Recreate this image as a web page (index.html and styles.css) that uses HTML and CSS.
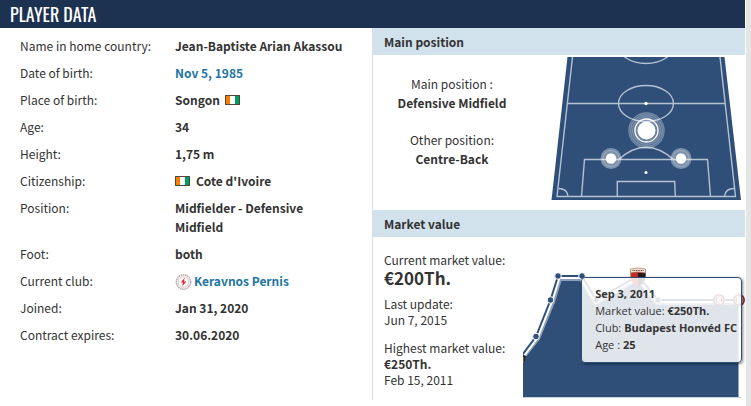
FILE: index.html
```html
<!DOCTYPE html>
<html lang="en">
<head>
<meta charset="utf-8">
<title>Player data</title>
<link rel="stylesheet" href="styles.css">
</head>
<body>
<svg class="defs" aria-hidden="true">
  <symbol id="flag" viewBox="0 0 15 10">
    <path fill="#fff" d="M0 0h15v10H0z"/><path fill="#f77f00" d="M0 0h5v10H0z"/><path fill="#009e60" d="M10 0h5v10h-5z"/>
    <path fill="none" stroke="#50463f" d="M.5.5h14v9H.5z"/>
  </symbol>
</svg>
<main class="panel">
  <h1 class="panel-title">PLAYER DATA</h1>
  <div class="columns">
    <section class="facts">
      <table class="facts-table">
        <tr><th scope="row">Name in home country:</th><td>Jean-Baptiste Arian Akassou</td></tr>
        <tr><th scope="row">Date of birth:</th><td><a href="#birth">Nov 5, 1985</a></td></tr>
        <tr><th scope="row">Place of birth:</th><td>Songon <svg class="flag flag-after"><use href="#flag"/></svg></td></tr>
        <tr><th scope="row">Age:</th><td>34</td></tr>
        <tr><th scope="row">Height:</th><td>1,75 m</td></tr>
        <tr><th scope="row">Citizenship:</th><td><svg class="flag flag-before"><use href="#flag"/></svg>Cote d'Ivoire</td></tr>
        <tr><th scope="row">Position:</th><td>Midfielder - Defensive<br>Midfield</td></tr>
        <tr><th scope="row">Foot:</th><td>both</td></tr>
        <tr><th scope="row">Current club:</th><td><svg class="crest" viewBox="0 0 17 16"><circle cx="8.5" cy="8" r="7.2" fill="#f8f3f3" stroke="#b5a9ab" stroke-width="1.4" stroke-dasharray="1.6 .6"/><circle cx="8.5" cy="8" r="5.2" fill="#fff" stroke="#e1babd" stroke-width=".8"/><path fill="#e2252e" d="M9.6 3.8 5.8 8.5h2.3L7 12.4 11.4 7.500H9z"/></svg><a href="#club">Keravnos Pernis</a></td></tr>
        <tr><th scope="row">Joined:</th><td>Jan 31, 2020</td></tr>
        <tr><th scope="row">Contract expires:</th><td>30.06.2020</td></tr>
      </table>
    </section>
    <div class="side">
      <section>
        <h2 class="bar">Main position</h2>
        <div class="position">
          <div class="position-text">
            <p>Main position :<br><b>Defensive Midfield</b></p>
            <p>Other position:<br><b>Centre-Back</b></p>
          </div>
          <svg class="pitch" viewBox="551 57 190 143" role="img" aria-label="Pitch">
            <path fill="#2f4f79" d="M567.500 57h157L741 200H551.500z"/>
            <g fill="none" stroke="#b4c2d3" stroke-width="1.4">
              <path d="M572.500 57 557 196.500H735.500L720 57M567 103.500h158"/>
              <ellipse cx="646" cy="103.500" rx="27.500" ry="18"/>
              <ellipse cx="646" cy="45.500" rx="27.500" ry="18"/>
              <path d="M581.500 196.500 584.500 159.500H707.500L710.500 196.500M617.300 196.500V181.500H674.700L675.300 196.500M618 160Q646 134.500 674 160M558.500 188.500Q567 188.500 568 196M734 188.500Q725.500 188.500 724.500 196"/>
            </g>
            <g fill="#fff"><circle cx="646" cy="103.500" r="1.700"/><circle cx="646" cy="172.500" r="1.500"/></g>
            <g fill="#fff">
              <circle cx="646.500" cy="130.500" r="18" fill-opacity=".22"/>
              <circle cx="646.500" cy="130.500" r="13" fill-opacity=".12"/>
              <circle cx="611" cy="158.500" r="10.500" fill-opacity=".38"/>
              <circle cx="681" cy="158.500" r="10.500" fill-opacity=".38"/>
              <circle cx="646.500" cy="130.500" r="9"/>
              <circle cx="611" cy="158.500" r="5.200"/>
              <circle cx="681" cy="158.500" r="5.200"/>
            </g>
            <g fill="none" stroke="#fff">
              <circle cx="646.500" cy="130.500" r="11.500" stroke-width="1.300"/>
              <g stroke-opacity=".32" stroke-width=".7"><circle cx="646.500" cy="130.500" r="14"/><circle cx="646.500" cy="130.500" r="16"/><circle cx="646.500" cy="130.500" r="17.800"/><circle cx="611" cy="158.500" r="8"/><circle cx="681" cy="158.500" r="8"/></g>
            </g>
          </svg>
        </div>
      </section>
      <section>
        <h2 class="bar">Market value</h2>
        <div class="market">
          <div class="market-text">
            <p class="current">Current market value:<b class="value">€200Th.</b></p>
            <p>Last update:<br>Jun 7, 2015</p>
            <p>Highest market value:<br><b>€250Th.</b><br>Feb 15, 2011</p>
          </div>
          <div class="chart">
            <svg class="chart-plot" viewBox="523 265 222 134" role="img" aria-label="Market value history">
              <path fill="#2f4f79" d="M523 354 536 336.500 550.500 300 558 276H582L596 300 638 276 658 300H738.500V397H523z"/>
              <path stroke="#c0d0e0" d="M523 397.500H741"/>
              <path fill="none" stroke="#fff" stroke-opacity=".45" stroke-width="4" d="M525 355 538 338.500 553 302 560 279H581L596 303 638 279 657 303H738"/>
              <path fill="none" stroke="#fff" stroke-width="6" d="M523 354 536 336.500 550.500 300 558 276H582L596 300 638 276 658 300H739"/>
              <path fill="none" stroke="#2f4f79" stroke-width="2" d="M523 354 536 336.500 550.500 300 558 276H582L596 300 638 276 658 300H739"/>
              <path fill="#241c18" d="M523 356h2.500l-.5 5-2 3z"/><path fill="#806b37" d="M523 357h1v6h-1z"/>
              <g fill="#2f4f79" stroke="#fff"><circle cx="536" cy="336.500" r="3.300"/><circle cx="550.500" cy="300" r="3.300"/><circle cx="558" cy="276" r="3.300"/><circle cx="582" cy="276" r="3.300"/><circle cx="596" cy="300" r="3.300"/><circle cx="658" cy="300" r="3.300"/></g>
              <path fill="#c52b23" d="M630.500 271q7.500-5 15 0v5q0 7-7.500 11-7.500-4-7.500-11z"/><path fill="#211d1c" d="M638 273h7.500v4q-1 6-7.500 10z"/><path fill="#ede3d2" stroke="#8e7154" stroke-width=".6" d="M630.500 269q7.500-2 15 0v4q-7.500-2-15 0z"/><path stroke="#8b3028" stroke-width="1.200" stroke-dasharray="1 .7" d="M632.500 270.500h11"/>
              <g fill="#8f2c36"><circle cx="719" cy="300" r="6"/><circle cx="739" cy="300" r="6"/></g>
              <g fill="none" stroke="#e1b8bc"><circle cx="719" cy="300" r="4"/><circle cx="739" cy="300" r="4"/></g>
              <path fill="#e7caca" d="M717 297h4v6h-4zM737 297h4v6h-4z"/>
            </svg>
            <div class="tooltip"><b>Sep 3, 2011</b><br>Market value: <b>€250Th.</b><br>Club: <b>Budapest Honvéd FC</b><br>Age : <b>25</b></div>
          </div>
        </div>
      </section>
    </div>
  </div>
</main>
</body>
</html>
```
FILE: styles.css
```css
* {
  box-sizing: border-box;
}

body {
  margin: 0;
  min-height: 100vh;
  padding-right: 6px;
  background: linear-gradient(#e5e5e5, #e5e5e5) right / 5px 100% no-repeat #fff;
  color: #333;
  font: 12px/19px "Noto Sans CJK SC", "Noto Sans", sans-serif;
}

h1, h2, p {
  margin: 0;
}

a {
  color: #1d75a3;
  text-decoration: none;
}

.defs {
  position: absolute;
  width: 0;
  height: 0;
}

.panel-title {
  padding: 0 10px;
  background: #1d3150;
  color: #fff;
  font: 18px/28px "Liberation Sans Narrow", "Oswald", "Roboto", sans-serif;
}

.columns {
  display: grid;
  grid-template-columns: 372fr 373fr;
}

.facts {
  padding: 4px 20px 0;
}

.facts-table {
  border-collapse: collapse;
  width: 100%;
}

.facts-table th,
.facts-table td {
  padding: 4px 0;
  text-align: left;
  vertical-align: top;
}

.facts-table th {
  width: 155px;
  font-weight: normal;
}

.facts-table td {
  font-weight: bold;
}

.flag {
  width: 15px;
  height: 10px;
}

.flag-after {
  margin-left: 2px;
}

.flag-before {
  margin-right: 6px;
}

.crest {
  width: 17px;
  height: 16px;
  margin-right: 2px;
  vertical-align: -4px;
}

.side {
  border-left: 1px solid #ddd;
}

.bar {
  padding: 1px 11px 0;
  background: #d2e2ec;
  font-size: 12px;
  line-height: 26px;
}

.position {
  display: flex;
  justify-content: space-between;
  padding: 2px 4px 10px 12px;
}

.position-text {
  display: grid;
  align-content: start;
  gap: 18px;
  width: 134px;
  padding-top: 17px;
  text-align: center;
}

.pitch {
  width: 190px;
  height: 143px;
}

.market {
  display: flex;
  justify-content: space-between;
  padding: 15px 0 0 11px;
}

.market-text {
  line-height: 16px;
  white-space: nowrap;
}

.market-text p {
  margin-bottom: 12px;
}

.market-text .current {
  margin-bottom: 8px;
}

.value {
  display: block;
  font-size: 17px;
  line-height: 20px;
}

.chart {
  position: relative;
  padding-top: 13px;
}

.chart-plot {
  display: block;
  width: 222px;
  height: 134px;
}

.tooltip {
  position: absolute;
  top: 25px;
  right: 3px;
  padding: 7px 4px 9px 13px;
  border: 1px solid #2f4f79;
  border-radius: 4px;
  background: rgba(255, 255, 255, 0.85);
  box-shadow: 1px 1px 3px rgba(0, 0, 0, 0.5);
  font: 11px/17px "Open Sans", "Noto Sans", sans-serif;
  white-space: nowrap;
}
```
